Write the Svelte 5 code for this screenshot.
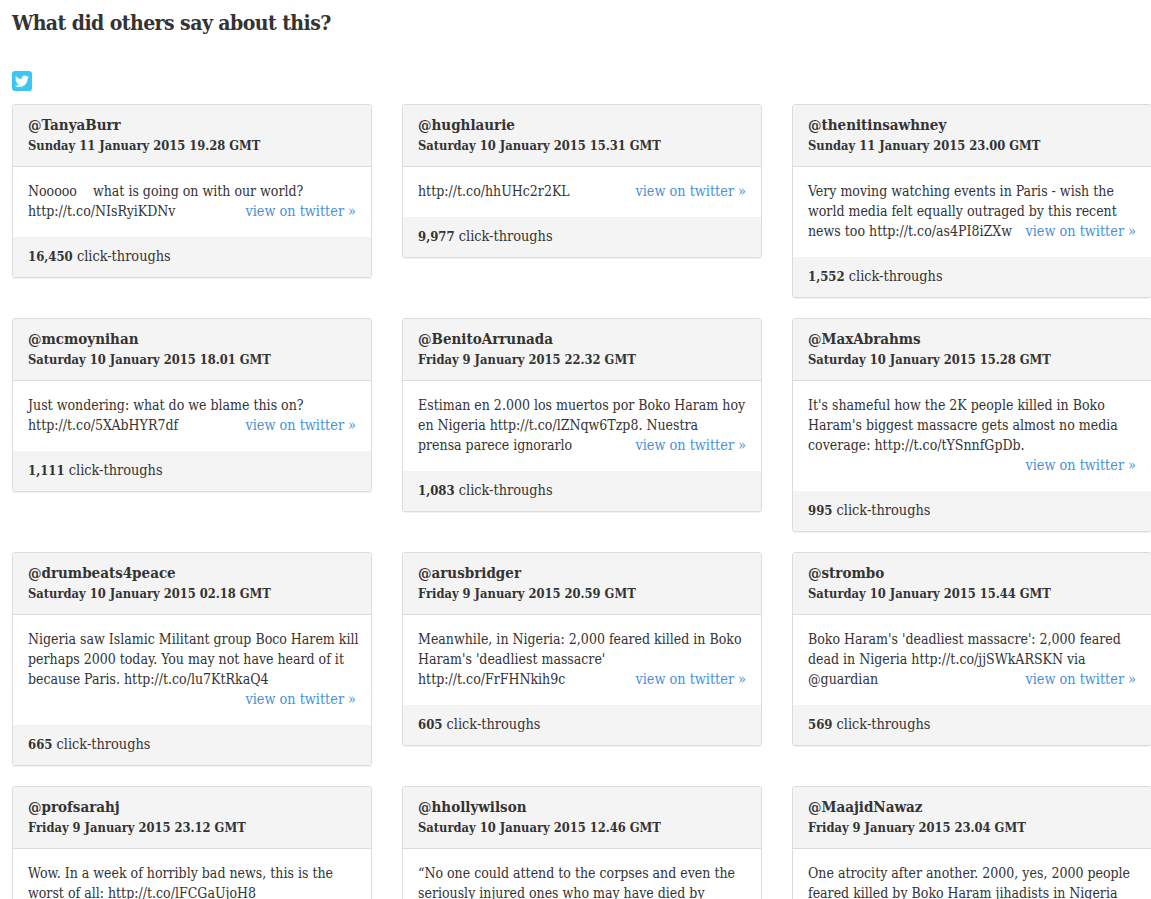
<script>
	const twitterPath = "M22.46 6c-.77.35-1.6.58-2.46.69.88-.53 1.56-1.37 1.88-2.38-.83.5-1.75.85-2.72 1.05C18.37 4.5 17.26 4 16 4c-2.35 0-4.27 1.92-4.27 4.29 0 .34.04.67.11.98C8.28 9.09 5.11 7.38 3 4.79c-.37.63-.58 1.37-.58 2.15 0 1.49.75 2.81 1.91 3.56-.71 0-1.37-.2-1.95-.5v.03c0 2.08 1.48 3.82 3.44 4.21a4.22 4.22 0 0 1-1.93.07 4.28 4.28 0 0 0 4 2.98 8.521 8.521 0 0 1-5.33 1.84c-.34 0-.68-.02-1.02-.06C3.44 20.29 5.7 21 8.12 21 16 21 20.33 14.46 20.33 8.79c0-.19 0-.37-.01-.56.84-.6 1.56-1.36 2.14-2.23z";

	// line breaks are kept by hand, the substitute font wraps differently
	const tweets = [
		{ handle: "TanyaBurr", date: "Sunday 11 January 2015 19.28 GMT", text: "Nooooo \u00a0\u00a0\u00a0what is going on with our world?\nhttp://t.co/NIsRyiKDNv", clicks: "16,450" },
		{ handle: "hughlaurie", date: "Saturday 10 January 2015 15.31 GMT", text: "http://t.co/hhUHc2r2KL", clicks: "9,977" },
		{ handle: "thenitinsawhney", date: "Sunday 11 January 2015 23.00 GMT", text: "Very moving watching events in Paris - wish the\nworld media felt equally outraged by this recent\nnews too http://t.co/as4PI8iZXw", clicks: "1,552" },
		{ handle: "mcmoynihan", date: "Saturday 10 January 2015 18.01 GMT", text: "Just wondering: what do we blame this on?\nhttp://t.co/5XAbHYR7df", clicks: "1,111" },
		{ handle: "BenitoArrunada", date: "Friday 9 January 2015 22.32 GMT", text: "Estiman en 2.000 los muertos por Boko Haram hoy\nen Nigeria http://t.co/lZNqw6Tzp8. Nuestra\nprensa parece ignorarlo", clicks: "1,083" },
		{ handle: "MaxAbrahms", date: "Saturday 10 January 2015 15.28 GMT", text: "It's shameful how the 2K people killed in Boko\nHaram's biggest massacre gets almost no media\ncoverage: http://t.co/tYSnnfGpDb.\n", clicks: "995" },
		{ handle: "drumbeats4peace", date: "Saturday 10 January 2015 02.18 GMT", text: "Nigeria saw Islamic Militant group Boco Harem kill\nperhaps 2000 today. You may not have heard of it\nbecause Paris. http://t.co/lu7KtRkaQ4\n", clicks: "665" },
		{ handle: "arusbridger", date: "Friday 9 January 2015 20.59 GMT", text: "Meanwhile, in Nigeria: 2,000 feared killed in Boko\nHaram's 'deadliest massacre'\nhttp://t.co/FrFHNkih9c", clicks: "605" },
		{ handle: "strombo", date: "Saturday 10 January 2015 15.44 GMT", text: "Boko Haram's 'deadliest massacre': 2,000 feared\ndead in Nigeria http://t.co/jjSWkARSKN via\n@guardian", clicks: "569" },
		{ handle: "profsarahj", date: "Friday 9 January 2015 23.12 GMT", text: "Wow. In a week of horribly bad news, this is the\nworst of all: http://t.co/lFCGaUjoH8\n", clicks: "" },
		{ handle: "hhollywilson", date: "Saturday 10 January 2015 12.46 GMT", text: "“No one could attend to the corpses and even the\nseriously injured ones who may have died by\n", clicks: "" },
		{ handle: "MaajidNawaz", date: "Friday 9 January 2015 23.04 GMT", text: "One atrocity after another. 2000, yes, 2000 people\nfeared killed by Boko Haram jihadists in Nigeria\n", clicks: "" }
	];
</script>

<main>
	<h2>What did others say about this?</h2>
	<svg class="twitterIcon" viewBox="0 0 20 20" aria-label="Twitter">
		<rect width="20" height="20" rx="3" fill="#3bc7f6" />
		<path transform="translate(1.8 1.8) scale(0.68)" d={twitterPath} fill="#fff" />
	</svg>
	<div class="tweets">
		{#each tweets as tweet}
		<article class="tweet">
			<header>
				<div class="handle">@{tweet.handle}</div>
				<div class="date">{tweet.date}</div>
			</header>
			<div class="body">
				<span class="text">{tweet.text}</span>
				<a href="#top">view on twitter »</a>
			</div>
			<footer><b>{tweet.clicks}</b> click-throughs</footer>
		</article>
		{/each}
	</div>
</main>

<style>
	:global(body) {
		overflow: hidden;
	}

	main {
		height: 899px;
		width: 1151px;
		overflow: hidden;
		padding: 0 0 0 12px;
		box-sizing: border-box;
		color: #333;
		font-family: "DejaVu Serif", "Liberation Serif", serif;
		font-stretch: condensed;
		font-size: 14px;
		line-height: 20px;
	}

	h2 {
		margin: 0;
		padding-top: 10px;
		font-size: 21px;
		line-height: 26px;
		font-weight: bold;
		letter-spacing: -0.55px;
	}

	.twitterIcon {
		display: block;
		width: 20px;
		height: 20px;
		margin: 35px 0 13px;
	}

	.tweets {
		display: grid;
		grid-template-columns: repeat(3, 360px);
		column-gap: 30px;
		row-gap: 20px;
		align-items: start;
	}

	.tweet {
		border: 1px solid #dcdcdc;
		border-radius: 3px;
		box-shadow: 0 1px 1px rgba(0, 0, 0, 0.06);
		overflow: hidden;
	}

	header {
		background: #f4f4f4;
		border-bottom: 1px solid #dcdcdc;
		padding: 10px 15px 9px;
	}

	.handle {
		font-size: 15px;
		font-weight: bold;
	}

	.date {
		font-weight: bold;
		font-size: 12.8px;
		line-height: 22px;
	}

	.body {
		padding: 14px 15px 16px;
		display: flow-root;
		background: #fff;
	}

	.text {
		white-space: pre;
	}

	.body a {
		float: right;
		color: #4a90d6;
		font-size: 14.3px;
		text-decoration: none;
	}

	footer {
		background: #f4f4f4;
		padding: 9px 15px 10px;
		font-size: 14.4px;
	}

	footer b {
		font-size: 13px;
	}
</style>
